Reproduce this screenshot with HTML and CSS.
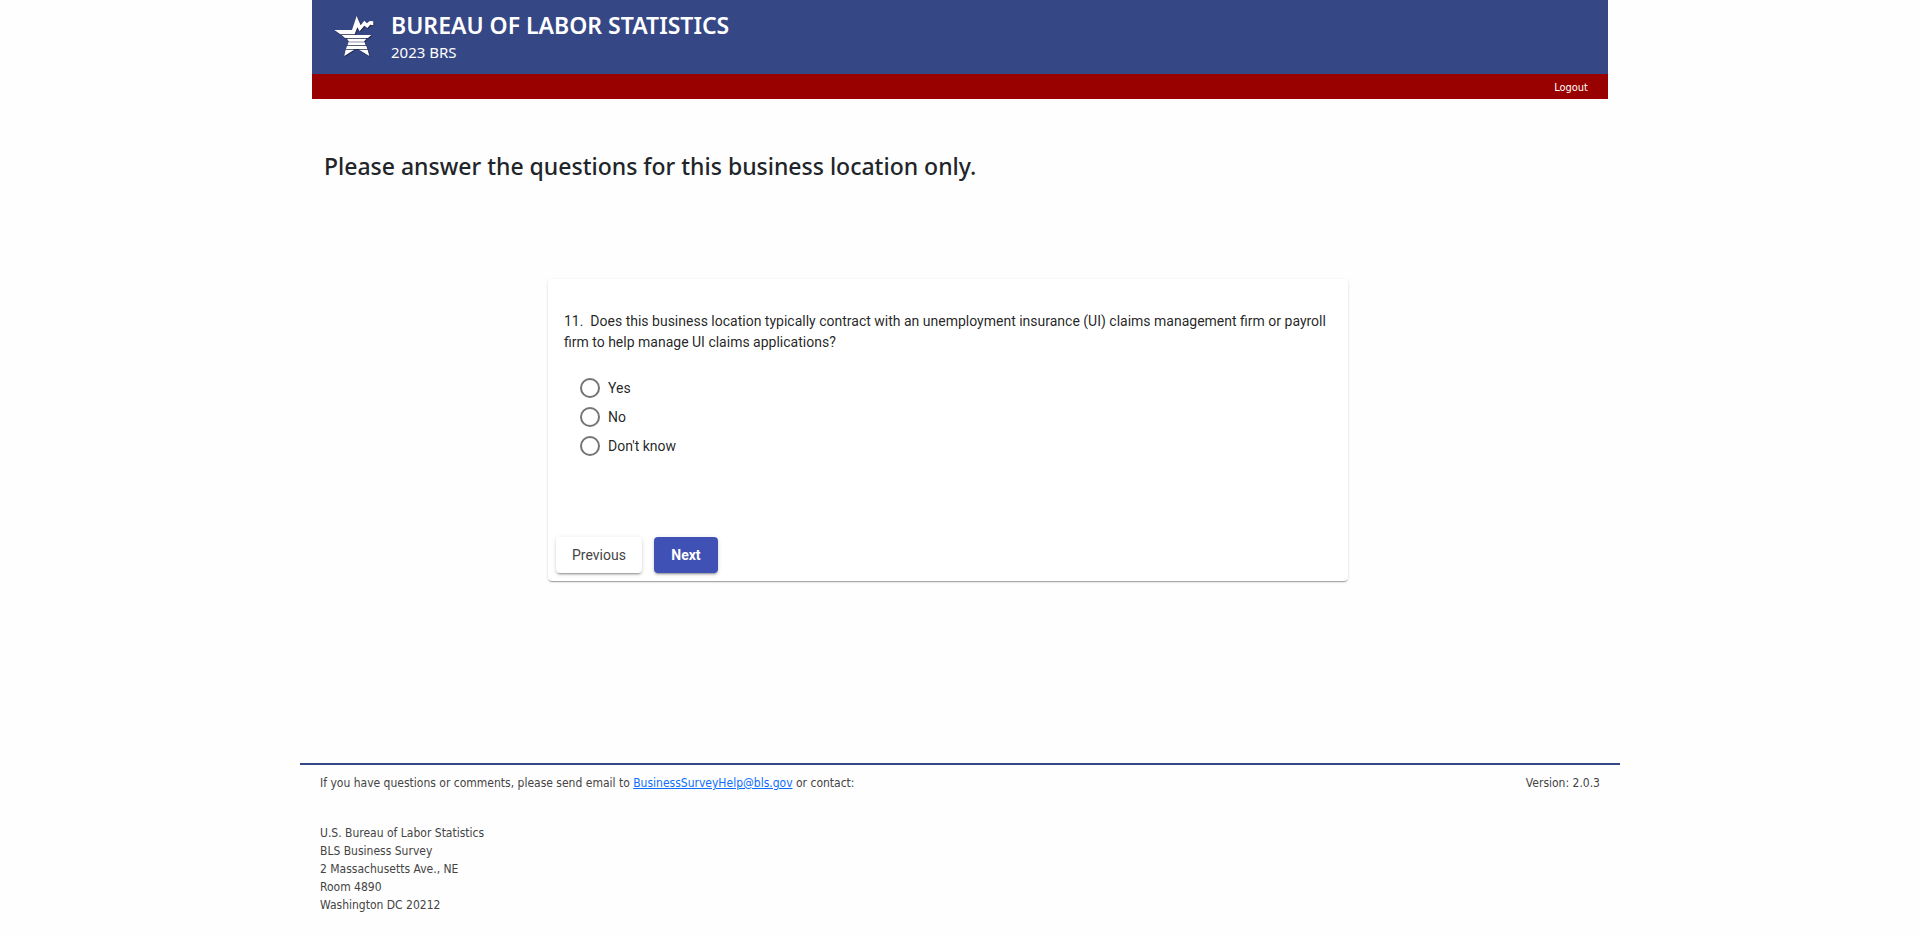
FILE: index.html
```html
<!DOCTYPE html>
<html lang="en">
<head>
    <meta charset="UTF-8">
    <meta name="viewport" content="width=device-width, initial-scale=1.0">
    <title>2023 BRS - Bureau of Labor Statistics</title>
    <link rel="stylesheet" href="styles.css">
</head>
<body>
    <div class="container">
        <header class="header">
            <div class="banner">
                <svg class="logo" viewBox="23 18 126 132" aria-hidden="true">
                    <g class="logo-shape">
                        <path d="M27 66H80L94 24L106 52L117 38L125 46L133 39L144 40V52L135 50L126 60L117 53L103 70L96 58L88 79H45Z"/>
                        <path d="M49 81H138L128 90H59Z"/>
                        <path d="M65 92H123L116 101H71Z"/>
                        <path d="M69 103H118L121 112H67Z"/>
                        <path d="M65 114H123L126 123H62Z"/>
                        <path d="M61 125H87L57 144Z"/>
                        <path d="M101 125H127L132 144Z"/>
                    </g>
                </svg>
                <div>
                    <div class="agency">BUREAU OF LABOR STATISTICS</div>
                    <div class="survey">2023 BRS</div>
                </div>
            </div>
            <nav class="nav-bar">
                <a href="#">Logout</a>
            </nav>
        </header>

        <main class="main">
            <h1 class="page-title">Please answer the questions for this business location only.</h1>

            <form class="card">
                <fieldset class="question">
                    <legend>11.&nbsp; Does this business location typically contract with an unemployment insurance (UI) claims management firm or payroll firm to help manage UI claims applications?</legend>
                    <div class="options">
                        <label class="option"><input type="radio" name="q11" value="yes">Yes</label>
                        <label class="option"><input type="radio" name="q11" value="no">No</label>
                        <label class="option"><input type="radio" name="q11" value="dk">Don't know</label>
                    </div>
                </fieldset>
                <div class="actions">
                    <button type="button" class="btn">Previous</button>
                    <button type="button" class="btn btn-primary">Next</button>
                </div>
            </form>
        </main>

        <footer class="footer">
            <div class="footer-row">
                <span>If you have questions or comments, please send email to <a href="mailto:BusinessSurveyHelp@bls.gov">BusinessSurveyHelp@bls.gov</a> or contact:</span>
                <span>Version: 2.0.3</span>
            </div>
            <address class="address">
                U.S. Bureau of Labor Statistics<br>
                BLS Business Survey<br>
                2 Massachusetts Ave., NE<br>
                Room 4890<br>
                Washington DC 20212
            </address>
        </footer>
    </div>
</body>
</html>
```
FILE: styles.css
```css
* {
    margin: 0;
    padding: 0;
    box-sizing: border-box;
}

body {
    background-color: #fefefe;
    color: #212529;
    font-family: "Segoe UI", "Noto Sans", sans-serif;
}

.container {
    max-width: 1320px;
    margin: 0 auto;
}

.header {
    margin: 0 12px;
    color: #fff;
}

.banner {
    display: flex;
    align-items: flex-start;
    gap: 16px;
    padding: 10px 21px;
    height: 74px;
    background-color: #364785;
}

.logo {
    width: 42px;
    height: 44px;
    margin-top: 4px;
}

.logo-shape {
    fill: #fff;
    filter: drop-shadow(2px 2px 2px rgba(0, 0, 0, 0.6));
}

.agency {
    font-size: 23px;
    font-weight: 600;
    line-height: 30px;
}

.survey {
    font-size: 15px;
    line-height: 24px;
}

.nav-bar {
    padding: 5px 20px 2px;
    background-color: #900;
    font-family: Tahoma, "DejaVu Sans Condensed", sans-serif;
    font-size: 11px;
    line-height: 18px;
    text-align: right;
}

.nav-bar a {
    color: #fff;
    text-decoration: none;
}

.main {
    padding: 52px 48px 0 24px;
}

.page-title {
    font-size: 23px;
    font-weight: 500;
    line-height: 30px;
}

/* Question card */
.card {
    max-width: 800px;
    margin: 98px auto 0;
    padding: 32px 8px 8px;
    border-radius: 4px;
    background-color: #fff;
    box-shadow: 0 2px 1px -1px rgba(0, 0, 0, 0.2), 0 1px 1px rgba(0, 0, 0, 0.14), 0 1px 3px rgba(0, 0, 0, 0.12);
    color: rgba(0, 0, 0, 0.87);
    font-family: Roboto, sans-serif;
    font-size: 14px;
}

.question {
    padding: 0 8px;
    border: none;
}

.question legend {
    line-height: 21px;
}

.options {
    display: flex;
    flex-direction: column;
    align-items: flex-start;
    gap: 9px;
    padding: 25px 16px 81px;
}

.option {
    display: flex;
    align-items: center;
    gap: 8px;
    line-height: 20px;
}

.option input {
    appearance: none;
    width: 20px;
    height: 20px;
    border: 2px solid #757575;
    border-radius: 50%;
}

.option input:checked {
    border-color: #3f51b5;
    background: radial-gradient(#3f51b5 5px, transparent 6px);
}

.actions {
    display: flex;
    gap: 12px;
}

.btn {
    min-width: 64px;
    height: 36px;
    padding: 0 16px;
    border: none;
    border-radius: 4px;
    background-color: #fff;
    box-shadow: 0 3px 1px -2px rgba(0, 0, 0, 0.2), 0 2px 2px rgba(0, 0, 0, 0.14), 0 1px 5px rgba(0, 0, 0, 0.12);
    color: #444;
    font-family: inherit;
    font-size: 14px;
    cursor: pointer;
}

.btn-primary {
    background-color: #3f51b5;
    color: #fff;
    font-weight: 700;
}

/* Footer */
.footer {
    margin-top: 182px;
    padding: 9px 20px;
    border-top: 2px solid #364785;
    color: #444;
    font-family: Tahoma, "DejaVu Sans Condensed", sans-serif;
    font-size: 12px;
    line-height: 18px;
}

.footer-row {
    display: flex;
    justify-content: space-between;
}

.footer a {
    color: #0d6efd;
}

.address {
    margin-top: 32px;
    font-style: normal;
}
```
